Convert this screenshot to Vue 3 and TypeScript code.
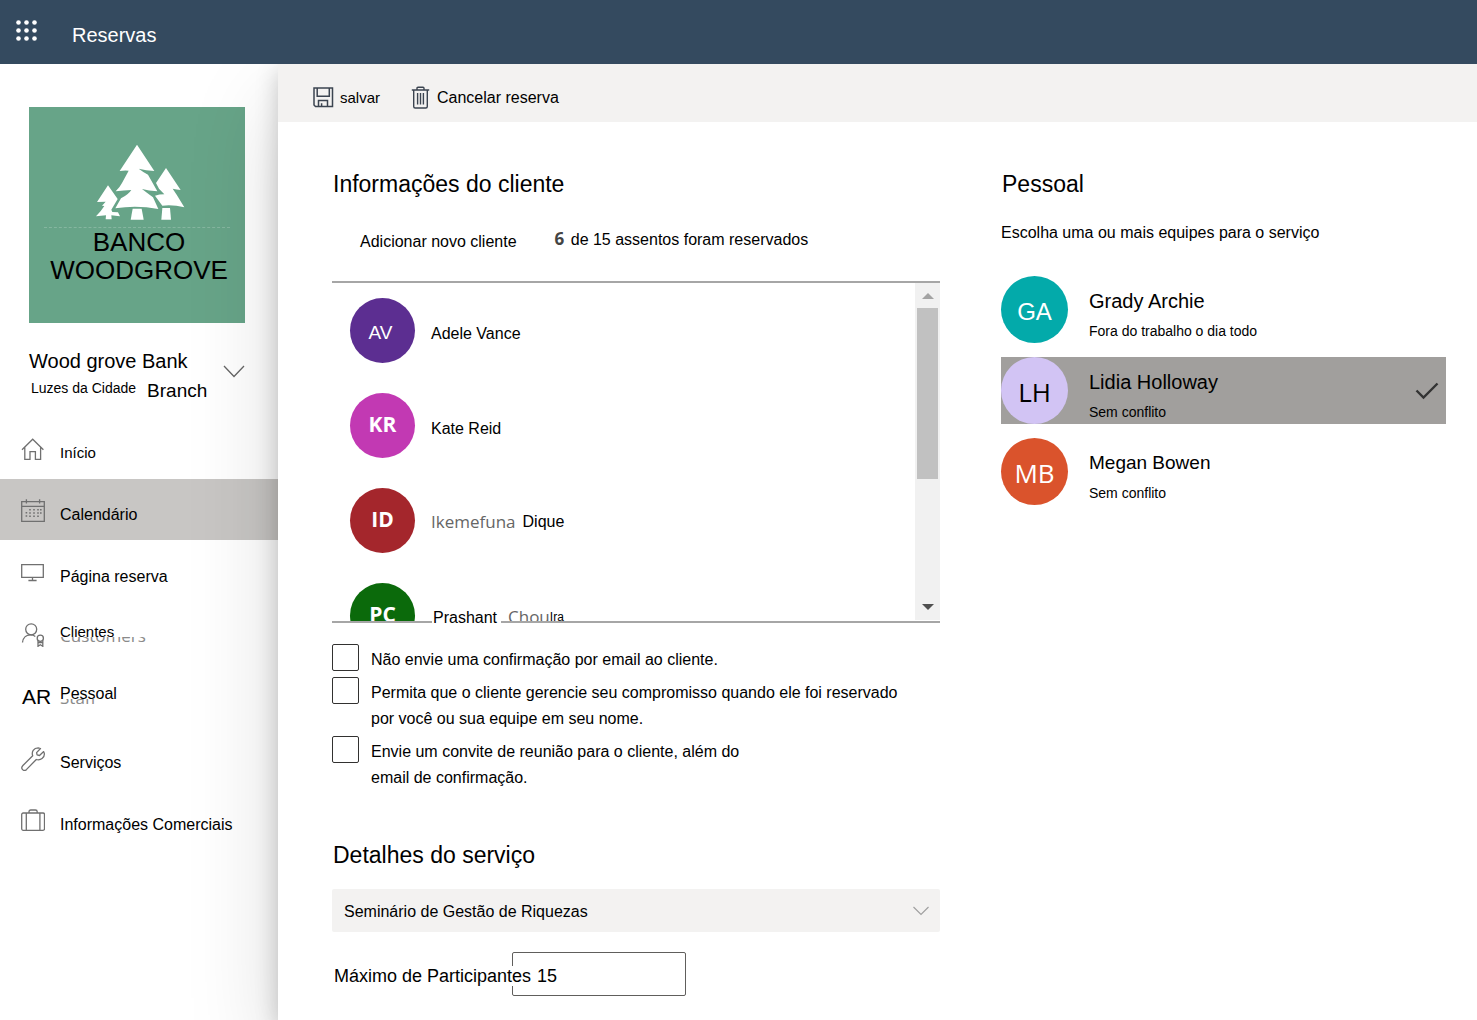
<script setup lang="ts">
import { ref } from 'vue'

interface NavItem {
  id: string
  label: string
  icon: string
  small?: boolean
  under?: string
}

interface Customer {
  initials: string
  name: string
  color: string
  kind: 'plain' | 'strong'
}

interface StaffMember {
  initials: string
  name: string
  status: string
  color: string
  kind: string
}

const active = ref('calendar')

const navItems: NavItem[] = [
  { id: 'home', label: 'Início', icon: 'home', small: true },
  { id: 'calendar', label: 'Calendário', icon: 'calendar' },
  { id: 'page', label: 'Página reserva', icon: 'monitor' },
  { id: 'customers', label: 'Clientes', icon: 'person', small: true, under: 'Customers' },
  { id: 'staff', label: 'Pessoal', icon: 'text', under: 'Staff' },
  { id: 'services', label: 'Serviços', icon: 'wrench' },
  { id: 'business', label: 'Informações Comerciais', icon: 'case' },
]

const customers: Customer[] = [
  { initials: 'AV', name: 'Adele Vance', color: '#5c2e91', kind: 'plain' },
  { initials: 'KR', name: 'Kate Reid', color: '#c239b3', kind: 'strong' },
]

const staff: StaffMember[] = [
  { initials: 'GA', name: 'Grady Archie', status: 'Fora do trabalho o dia todo', color: '#03aaaa', kind: 'ga' },
  { initials: 'LH', name: 'Lidia Holloway', status: 'Sem conflito', color: '#d2c4f4', kind: 'lh' },
  { initials: 'MB', name: 'Megan Bowen', status: 'Sem conflito', color: '#da532c', kind: 'mb' },
]

const selected = ref('LH')
const service = ref('Seminário de Gestão de Riquezas')
const maxAttendees = ref('15')
const dots = [2, 10, 18]
const calendarX = [9, 13, 17]
</script>

<template>
  <div class="page">
    <header class="topbar">
      <button class="launcher" type="button" aria-label="Aplicativos">
        <svg width="21" height="21" viewBox="0 0 21 21" fill="#fff">
          <template v-for="y in dots" :key="y">
            <circle v-for="x in dots" :key="x" :cx="x + 0.5" :cy="y + 0.5" r="2.3" />
          </template>
        </svg>
      </button>
      <span class="brand">Reservas</span>
    </header>

    <div class="body">
      <aside class="sidebar">
        <div class="logo">
          <svg class="trees" width="90" height="78" viewBox="225 130 270 234" fill="#fff">
            <path d="M351 135 403 214Q378 212 356 207 372 219 384 225L412 275Q386 274 366 268 384 282 399 293L415 328Q350 316 286 326L303 296Q325 285 334 271 312 272 287 275 300 262 306 250L326 213Q312 212 299 214Z" />
            <path d="M338 327H365L371 360H332Z" />
            <path d="M438 205 482 271Q470 270 458 267L470 285 493 323Q458 314 427 318L405 288Q418 284 433 284L417 267 408 250Z" />
            <path d="M427 325H450L453 360H424Z" />
            <path d="M264 257 293 298 274 330 277 337 294 338 300 350Q286 349 274 347L275 359H257L258 347 228 350Q243 335 253 319L246 318 257 306 231 307Z" />
          </svg>
          <div class="logo-text">BANCO<br />WOODGROVE</div>
        </div>

        <div class="account">
          <div>
            <div class="account-name">Wood grove Bank</div>
            <div class="account-sub">
              <span class="city">Luzes da Cidade</span>
              <span class="branch">Branch</span>
            </div>
          </div>
          <button class="account-toggle" type="button" aria-label="Trocar de conta">
            <svg width="22" height="13" viewBox="0 0 22 13" fill="none" stroke="#666" stroke-width="1.3">
              <path d="M1 1 11 11.5 21 1" />
            </svg>
          </button>
        </div>

        <nav class="nav">
          <a
            v-for="item in navItems"
            :key="item.id"
            href="#"
            class="nav-item"
            :class="{ active: active === item.id }"
            @click.prevent="active = item.id"
          >
            <span v-if="item.icon === 'text'" class="nav-letters">AR</span>
            <svg v-else class="nav-icon" width="24" height="24" viewBox="0 0 24 24" fill="none" stroke="#707070" stroke-width="1.3">
              <g v-if="item.icon === 'home'">
                <path d="M1 12.8 11.7 2.2 22.4 12.8M3.8 10.3V22.4H9V14.6H14.4V22.4H19.6V10.3" />
              </g>
              <g v-else-if="item.icon === 'calendar'">
                <path d="M.7 2.7H23.3V22.3H.7ZM.7 7.3H23.3M5.4.3V4.6M18.6.3V4.6" />
                <g stroke-width="1.6" stroke-dasharray="1.6 1.6">
                  <path v-for="x in calendarX" :key="x" :d="`M${x} 10V19.5`" />
                  <path d="M19.8 10V16.5M5.4 13V19.5" />
                </g>
              </g>
              <g v-else-if="item.icon === 'monitor'">
                <path d="M.7 3.7H22.3V16.3H.7ZM11.5 16.3V19.3M7.4 19.5H15.6" />
              </g>
              <g v-else-if="item.icon === 'person'">
                <circle cx="10.2" cy="6.3" r="5.5" />
                <path d="M1.5 19.5C2 14.5 5.5 11.8 9.5 11.8 11.6 11.8 13.3 12.5 14.3 13.4" />
                <circle cx="19.3" cy="15.3" r="3.1" />
                <path d="M17 17.5V23.3L19.3 21.8 21.8 23.3V17.5M17 19.6H21.8" />
              </g>
              <g v-else-if="item.icon === 'wrench'">
                <path d="M17.2.8C12.6.9 10.3 4.8 11.7 8.8L1.9 18.5C-.9 21.4 2.6 25.2 5.6 22.4L15.3 12.5C19.5 13.8 23.8 10.8 23.3 6.4L22.7 4.6 18.5 8.5 16.1 7.9 15.6 5.6 19.5 1.5Z" stroke-linejoin="round" />
              </g>
              <g v-else>
                <rect x=".7" y="4" width="22.8" height="17.3" rx="1.5" />
                <path d="M8 4V2.8Q8 1 9.8 1H14.4Q16.2 1 16.2 2.8V4M5.3 4V21.3M18.9 4V21.3" />
              </g>
            </svg>
            <span class="nav-label" :class="{ small: item.small, layered: item.under }">
              <span v-if="item.under" class="under" aria-hidden="true"><span>{{ item.under }}</span></span>
              <span class="over">{{ item.label }}</span>
            </span>
          </a>
        </nav>
      </aside>

      <main class="main">
        <div class="toolbar">
          <button type="button" class="tool save">
            <svg width="21" height="21" viewBox="0 0 21 21" fill="none" stroke="#3b4450" stroke-width="1.5">
              <path d="M1 1H19.5V19.5H2.5L1 18ZM4.2 1V9.3H16.3V1M5.5 19.5V13.5H14.5V19.5M8.6 16.2V19.5" />
            </svg>
            <span>salvar</span>
          </button>
          <button type="button" class="tool">
            <svg width="19" height="23" viewBox="0 0 19 23" fill="none" stroke="#3b4450" stroke-width="1.4">
              <path d="M.8 4H18.2M6 4V2.2Q6 1.2 7 1.2H12Q13 1.2 13 2.2V4M2.7 4V20.5Q2.7 22 4.2 22H14.8Q16.3 22 16.3 20.5V4M6.6 7V18.5M9.5 7V18.5M12.4 7V18.5" />
            </svg>
            <span>Cancelar reserva</span>
          </button>
        </div>

        <div class="content">
          <section class="booking">
            <h2>Informações do cliente</h2>
            <div class="list-head">
              <button type="button" class="add">Adicionar novo cliente</button>
              <p class="seats"><strong>6</strong> de 15 assentos foram reservados</p>
            </div>

            <div class="list-box">
              <ul class="customers">
                <li v-for="c in customers" :key="c.initials">
                  <span class="avatar" :class="c.kind" :style="{ background: c.color }">{{ c.initials }}</span>
                  <span class="customer-name">{{ c.name }}</span>
                </li>
                <li>
                  <span class="avatar strong red">ID</span>
                  <span class="customer-name split"><span class="light">Ikemefuna</span><span>Dique</span></span>
                </li>
                <li>
                  <span class="avatar strong green">PC</span>
                  <span class="surname"><span class="light">Chou</span><span class="tail">Ira</span></span>
                </li>
              </ul>
              <div class="scrollbar" aria-hidden="true">
                <span class="arrow up"></span>
                <span class="thumb"></span>
                <span class="arrow down"></span>
              </div>
              <span class="first-name">Prashant</span>
            </div>

            <div class="options">
              <label class="option">
                <input type="checkbox" />
                <span>Não envie uma confirmação por email ao cliente.</span>
              </label>
              <label class="option">
                <input type="checkbox" />
                <span>Permita que o cliente gerencie seu compromisso quando ele foi reservado<br />por você ou sua equipe em seu nome.</span>
              </label>
              <label class="option">
                <input type="checkbox" />
                <span>Envie um convite de reunião para o cliente, além do<br />email de confirmação.</span>
              </label>
            </div>

            <h2 id="details">Detalhes do serviço</h2>
            <div class="select-wrap">
              <select v-model="service" aria-labelledby="details">
                <option>Seminário de Gestão de Riquezas</option>
              </select>
              <svg width="16" height="10" viewBox="0 0 16 10" fill="none" stroke="#a0a0a0" stroke-width="1.2">
                <path d="M.5 1 8 8.5 15.5 1" />
              </svg>
            </div>
            <div class="field">
              <label for="max">Máximo de Participantes</label>
              <input id="max" v-model="maxAttendees" type="text" />
            </div>
          </section>

          <section class="staff">
            <h2>Pessoal</h2>
            <p>Escolha uma ou mais equipes para o serviço</p>
            <div class="staff-list">
              <button
                v-for="m in staff"
                :key="m.initials"
                type="button"
                class="member"
                :class="{ selected: selected === m.initials }"
                @click="selected = m.initials"
              >
                <span class="face" :class="m.kind" :style="{ background: m.color }">{{ m.initials }}</span>
                <span class="member-text">
                  <span class="member-name" :class="m.kind">{{ m.name }}</span>
                  <span class="member-status">{{ m.status }}</span>
                </span>
                <svg v-if="selected === m.initials" class="check" width="24" height="18" viewBox="0 0 24 18" fill="none" stroke="#333" stroke-width="2.4">
                  <path d="M1.5 8.5 8.5 15.5 22.5 1.5" />
                </svg>
              </button>
            </div>
          </section>
        </div>
      </main>
    </div>
  </div>
</template>

<style>
body {
  margin: 0;
  background: #fff;
}
</style>

<style scoped>
.page {
  min-height: 100vh;
  display: flex;
  flex-direction: column;
  font-family: "Liberation Sans", Arial, sans-serif;
  font-size: 16px;
  line-height: 20px;
  color: #000;
}
.page * {
  box-sizing: border-box;
}
button {
  font: inherit;
  color: inherit;
  background: none;
  border: 0;
  padding: 0;
  text-align: left;
  cursor: pointer;
}
h2 {
  margin: 0;
  padding-left: 1px;
  font-size: 23px;
  line-height: 28px;
  font-weight: 400;
}
p {
  margin: 0;
}
svg {
  display: block;
  flex: none;
}

.topbar {
  position: relative;
  z-index: 2;
  height: 64px;
  background: #344a5f;
  color: #fff;
  display: flex;
  align-items: center;
  gap: 35px;
  padding-left: 16px;
}
.launcher {
  padding-bottom: 3px;
}
.brand {
  font-size: 20px;
  line-height: 24px;
  padding-top: 5px;
}

.body {
  flex: 1;
  display: flex;
}
.sidebar {
  flex: none;
  width: 278px;
  padding-top: 43px;
}
.logo {
  width: 216px;
  height: 216px;
  margin-left: 29px;
  padding-top: 36px;
  background: #67a488;
  display: flex;
  flex-direction: column;
  align-items: center;
}
.trees {
  margin-left: 6px;
}
.logo-text {
  width: 186px;
  margin-top: 6px;
  padding-left: 4px;
  border-top: 1px dashed rgba(255, 255, 255, 0.2);
  font-size: 26px;
  line-height: 28px;
  text-align: center;
  white-space: nowrap;
}
.account {
  display: flex;
  align-items: flex-start;
  justify-content: space-between;
  margin: 26px 33px 14px 29px;
}
.account-name {
  font-size: 20px;
  line-height: 24px;
}
.account-sub {
  display: flex;
  gap: 11px;
  margin-top: 5px;
  padding-left: 2px;
}
.city {
  font-size: 14px;
}
.branch {
  padding-top: 1px;
  font-size: 19px;
  line-height: 24px;
}
.account-toggle {
  margin-top: 16px;
}

.nav {
  display: flex;
  flex-direction: column;
  gap: 1px;
}
.nav-item {
  height: 61px;
  padding: 3px 0 0 21px;
  display: flex;
  align-items: center;
  gap: 15px;
  color: inherit;
  text-decoration: none;
  white-space: nowrap;
}
.nav-item.active {
  background: #c8c6c4;
}
.nav-letters {
  width: 24px;
  padding-left: 1px;
  font-size: 21px;
  line-height: 24px;
}
.nav-label {
  position: relative;
  padding-top: 8px;
}
.nav-label.small {
  font-size: 15px;
}
.nav-label.layered {
  padding: 0 0 6px;
}
.over {
  position: relative;
}
.under {
  position: absolute;
  left: 0;
  top: 15px;
  height: 7px;
  overflow: hidden;
  font-family: "Open Sans", "Noto Sans", sans-serif;
  font-size: 17px;
  line-height: 24px;
  color: #8a8a8a;
}
.under span {
  display: block;
  margin-top: -13px;
}

.main {
  position: relative;
  z-index: 1;
  flex: 1;
  min-width: 0;
  background: #fff;
  box-shadow: 0 38px 86px rgba(0, 0, 0, 0.15), 0 7px 22px rgba(0, 0, 0, 0.2);
}
.toolbar {
  height: 58px;
  padding: 9px 0 0 35px;
  background: #f3f2f1;
  display: flex;
  align-items: center;
  gap: 31px;
}
.tool {
  display: flex;
  align-items: center;
  gap: 7px;
}
.save {
  gap: 6px;
  font-size: 15px;
}
.content {
  display: grid;
  grid-template-columns: 608fr 445fr;
  column-gap: 61px;
  padding: 48px 31px 24px 54px;
}

.list-head {
  display: flex;
  align-items: flex-start;
  gap: 38px;
  margin-top: 31px;
  padding-left: 28px;
}
.add {
  padding-top: 3px;
}
.seats strong {
  margin-right: 2px;
  font-family: "Open Sans", "Noto Sans", sans-serif;
  font-weight: 700;
  font-size: 17px;
  line-height: 20px;
  color: #444;
}
.list-box {
  position: relative;
  display: flex;
  height: 342px;
  margin-top: 29px;
  border-top: 2px solid #a6a6a6;
  border-bottom: 2px solid #a6a6a6;
}
.customers {
  flex: 1;
  margin: 0;
  padding: 15px 0 0 18px;
  list-style: none;
  overflow: hidden;
  display: flex;
  flex-direction: column;
  gap: 30px;
}
.customers li {
  flex: none;
  display: flex;
  align-items: center;
  gap: 16px;
}
.avatar {
  flex: none;
  width: 65px;
  height: 65px;
  border-radius: 50%;
  display: flex;
  align-items: center;
  justify-content: center;
  color: #fff;
}
.avatar.plain {
  font-size: 19px;
  padding: 4px 4px 0 0;
}
.avatar.strong {
  font-family: "Open Sans", "Noto Sans", sans-serif;
  font-weight: 700;
  font-size: 21px;
  padding-bottom: 3px;
}
.red {
  background: #a4262c;
}
.green {
  background: #0b6a0b;
}
.customer-name {
  padding-top: 6px;
}
.split {
  display: flex;
  gap: 7px;
  padding-top: 3px;
}
.light {
  font-family: "Open Sans", "Noto Sans", sans-serif;
  font-size: 17px;
  line-height: 20px;
  color: #666;
}
.surname {
  display: flex;
  padding: 2px 0 0 77px;
}
.tail {
  margin-left: -1px;
  padding-left: 1px;
  background: #fff;
  font-size: 12px;
}
.first-name {
  position: absolute;
  left: 100px;
  bottom: -7px;
  padding: 0 4px 0 1px;
  background: #fff;
}
.scrollbar {
  width: 25px;
  margin-bottom: 1px;
  background: #f1f1f1;
  display: flex;
  flex-direction: column;
  align-items: center;
}
.thumb {
  width: 21px;
  height: 171px;
  margin: 9px 0 auto;
  background: #c1c1c1;
}
.arrow {
  border: 6px solid transparent;
}
.up {
  margin-top: 10px;
  border-top: 0;
  border-bottom-color: #a3a3a3;
}
.down {
  margin-bottom: 10px;
  border-bottom: 0;
  border-top-color: #505050;
}

.options {
  display: flex;
  flex-direction: column;
  gap: 4px;
  margin: 21px 0 50px;
}
.option {
  display: flex;
  align-items: flex-start;
  gap: 12px;
  line-height: 26px;
}
.option span {
  padding-top: 3px;
}
.option input {
  appearance: none;
  flex: none;
  width: 27px;
  height: 27px;
  margin: 0;
  border: 1px solid #323130;
  border-radius: 2px;
  background: #fff;
}
.option input:checked {
  background: #344a5f;
}
.select-wrap {
  display: grid;
  align-items: center;
  margin-top: 20px;
}
.select-wrap select,
.select-wrap svg {
  grid-area: 1 / 1;
}
.select-wrap svg {
  justify-self: end;
  margin-right: 11px;
  pointer-events: none;
}
.select-wrap select {
  appearance: none;
  width: 100%;
  height: 43px;
  padding: 2px 36px 0 12px;
  border: 0;
  border-radius: 2px;
  background: #f3f2f1;
  font: inherit;
  color: inherit;
}
.field {
  display: flex;
  align-items: center;
  margin-top: 20px;
  font-size: 18px;
}
.field label {
  position: relative;
  z-index: 1;
  margin: 3px -19px 0 2px;
  background: #fff;
  white-space: nowrap;
}
.field input {
  width: 174px;
  height: 44px;
  padding: 4px 8px 0 24px;
  border: 1px solid #605e5c;
  border-radius: 2px;
  background: #fff;
  font: inherit;
  color: inherit;
}

.staff p {
  margin-top: 25px;
}
.staff-list {
  display: flex;
  flex-direction: column;
  gap: 14px;
  margin-top: 33px;
}
.member {
  display: flex;
  align-items: center;
  gap: 21px;
  height: 67px;
}
.member.selected {
  background: #a19f9d;
}
.face {
  flex: none;
  width: 67px;
  height: 67px;
  border-radius: 50%;
  display: flex;
  align-items: center;
  justify-content: center;
  color: #fff;
}
.face.ga {
  font-size: 24px;
  padding-top: 4px;
}
.face.lh {
  font-family: "Open Sans", "Noto Sans", sans-serif;
  font-size: 26px;
  color: #000;
  padding-top: 2px;
}
.face.mb {
  font-family: "Open Sans", "Noto Sans", sans-serif;
  font-size: 26px;
  font-weight: 500;
  padding-top: 2px;
}
.member-text {
  flex: 1;
  display: flex;
  flex-direction: column;
  gap: 8px;
  padding-top: 10px;
}
.member-name {
  font-size: 20px;
  line-height: 24px;
}
.member-name.mb {
  font-size: 19px;
}
.member-status {
  font-size: 14px;
}
.check {
  margin-right: 7px;
}
</style>
